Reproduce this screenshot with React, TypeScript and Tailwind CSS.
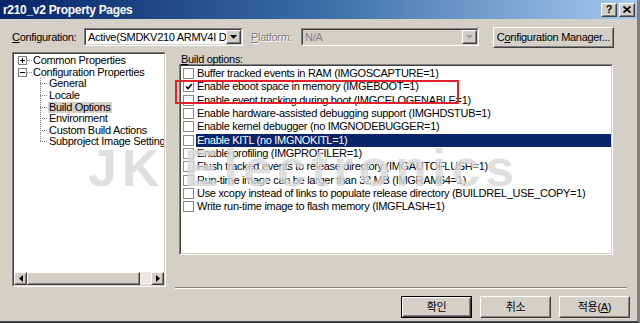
import React from "react";

const options = [
  "Buffer tracked events in RAM (IMGOSCAPTURE=1)",
  "Enable eboot space in memory (IMGEBOOT=1)",
  "Enable event tracking during boot (IMGCELOGENABLE=1)",
  "Enable hardware-assisted debugging support (IMGHDSTUB=1)",
  "Enable kernel debugger (no IMGNODEBUGGER=1)",
  "Enable KITL (no IMGNOKITL=1)",
  "Enable profiling (IMGPROFILER=1)",
  "Flush tracked events to release directory (IMGAUTOFLUSH=1)",
  "Run-time image can be larger than 32 MB (IMGRAM64=1)",
  "Use xcopy instead of links to populate release directory (BUILDREL_USE_COPY=1)",
  "Write run-time image to flash memory (IMGFLASH=1)",
];

const children = [
  "General",
  "Locale",
  "Build Options",
  "Environment",
  "Custom Build Actions",
  "Subproject Image Settings",
];

const Bevel = ({ className, children }: { className?: string; children?: React.ReactNode }) => (
  <div
    className={
      "border border-t-white border-l-white border-r-[#404040] border-b-[#404040] " + (className ?? "")
    }>
    <div className="w-full h-full border border-t-[#d4d0c8] border-l-[#d4d0c8] border-r-[#808080] border-b-[#808080] flex items-center justify-center whitespace-nowrap">
      {children}
    </div>
  </div>
);

const Sunken = ({ className, children }: { className?: string; children?: React.ReactNode }) => (
  <div
    className={
      "border border-t-[#808080] border-l-[#808080] border-r-white border-b-white " + (className ?? "")
    }>
    <div className="w-full h-full border border-t-[#404040] border-l-[#404040] border-r-[#d4d0c8] border-b-[#d4d0c8] overflow-hidden relative">
      {children}
    </div>
  </div>
);

const Arrow = ({ dir, color = "#000" }: { dir: "down" | "left" | "right"; color?: string }) => {
  const pts = dir === "down" ? "0,0 7,0 3.5,4" : dir === "left" ? "4,0 4,7 0,3.5" : "0,0 0,7 4,3.5";
  return (
    <svg width={dir === "down" ? 7 : 4} height={dir === "down" ? 4 : 7} viewBox={dir === "down" ? "0 0 7 4" : "0 0 4 7"}>
      <polygon points={pts} fill={color} />
    </svg>
  );
};

const Combo = ({ text, width, disabled }: { text: string; width: string; disabled?: boolean }) => (
  <Sunken className={width + " h-[18px] shrink-0"}>
    <div className={"h-full flex items-center " + (disabled ? "bg-[#d4d0c8]" : "bg-white")}>
      <span className={"flex-1 pl-[2px] whitespace-nowrap overflow-hidden " + (disabled ? "text-[#808080]" : "text-black")}>
        {text}
      </span>
      <Bevel className="w-[15px] h-[14px] bg-[#d4d0c8] shrink-0">
        <Arrow dir="down" color={disabled ? "#a0a0a0" : "#000"} />
      </Bevel>
    </div>
  </Sunken>
);

const PlusMinus = ({ open }: { open: boolean }) => (
  <div className="w-[9px] h-[9px] border border-[#808080] bg-white flex items-center justify-center relative shrink-0">
    <div className="absolute w-[5px] h-px bg-black" />
    {!open && <div className="absolute w-px h-[5px] bg-black" />}
  </div>
);

const Check = ({ checked }: { checked?: boolean }) => (
  <div className="w-[11px] h-[11px] border border-[#8a8a8a] bg-white flex items-center justify-center shrink-0">
    {checked && (
      <svg width="8" height="7" viewBox="0 0 8 7">
        <path d="M1 3.5 L3 5.5 L7 1" stroke="#000" strokeWidth="1.6" fill="none" />
      </svg>
    )}
  </div>
);

const DlgButton = ({ label, def }: { label: React.ReactNode; def?: boolean }) => (
  <div className={"w-[71px] h-[22px] " + (def ? "border border-black" : "")}>
    <Bevel className="w-full h-full bg-[#d4d0c8]">{label}</Bevel>
  </div>
);

export default function App() {
  return (
    <div className="w-[640px] h-[323px] bg-[#d4d0c8] relative overflow-hidden font-['Liberation_Sans','Noto_Sans_CJK_KR',sans-serif] text-[11px] tracking-[-0.3px] text-black leading-none border-r-[3px] border-r-[#808080] border-b-2 border-b-[#404040]">
      {/* title bar */}
      <div className="h-[19px] bg-gradient-to-r from-[#0a246a] via-[#3a6ea5] to-[#a6caf0] flex items-center justify-between pl-[3px] pr-[2px]">
        <span className="text-white font-bold text-[12px] tracking-[-0.3px]">r210_v2 Property Pages</span>
        <div className="flex gap-[2px]">
          <Bevel className="w-[16px] h-[14px] bg-[#d4d0c8]">
            <span className="font-bold text-[11px]">?</span>
          </Bevel>
          <Bevel className="w-[16px] h-[14px] bg-[#d4d0c8]">
            <svg width="8" height="7" viewBox="0 0 8 7">
              <path d="M0.5 0.5 L7.5 6.5 M7.5 0.5 L0.5 6.5" stroke="#000" strokeWidth="1.8" />
            </svg>
          </Bevel>
        </div>
      </div>

      {/* configuration row */}
      <div className="flex items-center mt-[8px] pl-[12px] h-[20px] whitespace-nowrap">
        <span className="w-[72px] shrink-0">
          <span className="underline">C</span>onfiguration:
        </span>
        <Combo text="Active(SMDKV210 ARMV4I Debug)" width="w-[159px]" />
        <span className="ml-[8px] w-[50px] shrink-0 text-[#808080] [text-shadow:1px_1px_0_#fff]">
          <span className="underline">P</span>latform:
        </span>
        <Combo text="N/A" width="w-[178px]" disabled />
        <div className="ml-[14px] shrink-0">
          <Bevel className="w-[121px] h-[21px] bg-[#d4d0c8]">
            <span>
              C<span className="underline">o</span>nfiguration Manager...
            </span>
          </Bevel>
        </div>
      </div>

      {/* main area */}
      <div className="flex mt-[5px] pl-[12px] h-[236px]">
        {/* tree */}
        <Sunken className="w-[154px] h-[235px] shrink-0">
          <div className="bg-white h-full flex flex-col">
            <div className="flex-1 relative pt-[1px]">
              <div className="h-[11.6px] flex items-center pl-[4px]">
                <PlusMinus open={false} />
                <div className="w-[5px] border-t border-dotted border-[#808080]" />
                <span className="ml-[1px] whitespace-nowrap">Common Properties</span>
              </div>
              <div className="h-[11.6px] flex items-center pl-[4px]">
                <PlusMinus open />
                <div className="w-[5px] border-t border-dotted border-[#808080]" />
                <span className="ml-[1px] whitespace-nowrap">Configuration Properties</span>
              </div>
              <div className="absolute left-[26px] top-[24px] h-[63px] border-l border-dotted border-[#808080]" />
              {children.map((c) => (
                <div key={c} className="h-[11.6px] flex items-center pl-[26px]">
                  <div className="w-[7px] border-t border-dotted border-[#808080] shrink-0" />
                  <span
                    className={
                      "ml-[1px] px-[1px] whitespace-nowrap leading-[11px] " + (c === "Build Options" ? "bg-[#d4d0c8]" : "")
                    }>
                    {c}
                  </span>
                </div>
              ))}
            </div>
            {/* horizontal scrollbar */}
            <div className="h-[13px] flex bg-[#ece9e2] shrink-0">
              <Bevel className="w-[13px] h-[13px] bg-[#d4d0c8]">
                <Arrow dir="left" />
              </Bevel>
              <Bevel className="w-[113px] h-[13px] bg-[#d4d0c8]" />
              <div className="flex-1" />
              <Bevel className="w-[13px] h-[13px] bg-[#d4d0c8]">
                <Arrow dir="right" />
              </Bevel>
            </div>
          </div>
        </Sunken>

        {/* right page */}
        <div className="ml-[9px] w-[452px] h-[236px] border-b border-b-[#808080] shadow-[0_1px_0_#fff] relative">
          <div className="pl-[6px] pt-[2px] h-[12px]">
            <span className="underline">B</span>uild options:
          </div>
          <Sunken className="ml-[4px] w-[434px] h-[191px]">
            <div className="bg-white h-full pt-[1px]">
              {options.map((o, i) => (
                <div key={o} className="h-[13.3px] flex items-center pl-[2px]">
                  <Check checked={i === 1} />
                  <span
                    className={
                      "ml-[2px] pl-[1px] flex-1 whitespace-nowrap h-[13px] flex items-center " +
                      (i === 5 ? "bg-[#0a246a] text-white" : "")
                    }>
                    {o}
                  </span>
                </div>
              ))}
            </div>
          </Sunken>
        </div>
      </div>

      {/* buttons */}
      <div className="flex justify-end gap-[8px] pr-[7px] mt-[8px]">
        <DlgButton label="확인" def />
        <DlgButton label="취소" />
        <DlgButton
          label={
            <span>
              적용(<span className="underline">A</span>)
            </span>
          }
        />
      </div>

      {/* highlight box */}
      <div className="absolute left-[175px] top-[80px] w-[284px] h-[24px] border-2 border-[#e3202b] pointer-events-none" />

      {/* watermark */}
      <div className="absolute left-[88px] top-[142px] text-[52px] font-black text-[#d8d8d8] opacity-80 pointer-events-none whitespace-nowrap leading-none tracking-[5px]">
        JK Electronics
      </div>
    </div>
  );
}
